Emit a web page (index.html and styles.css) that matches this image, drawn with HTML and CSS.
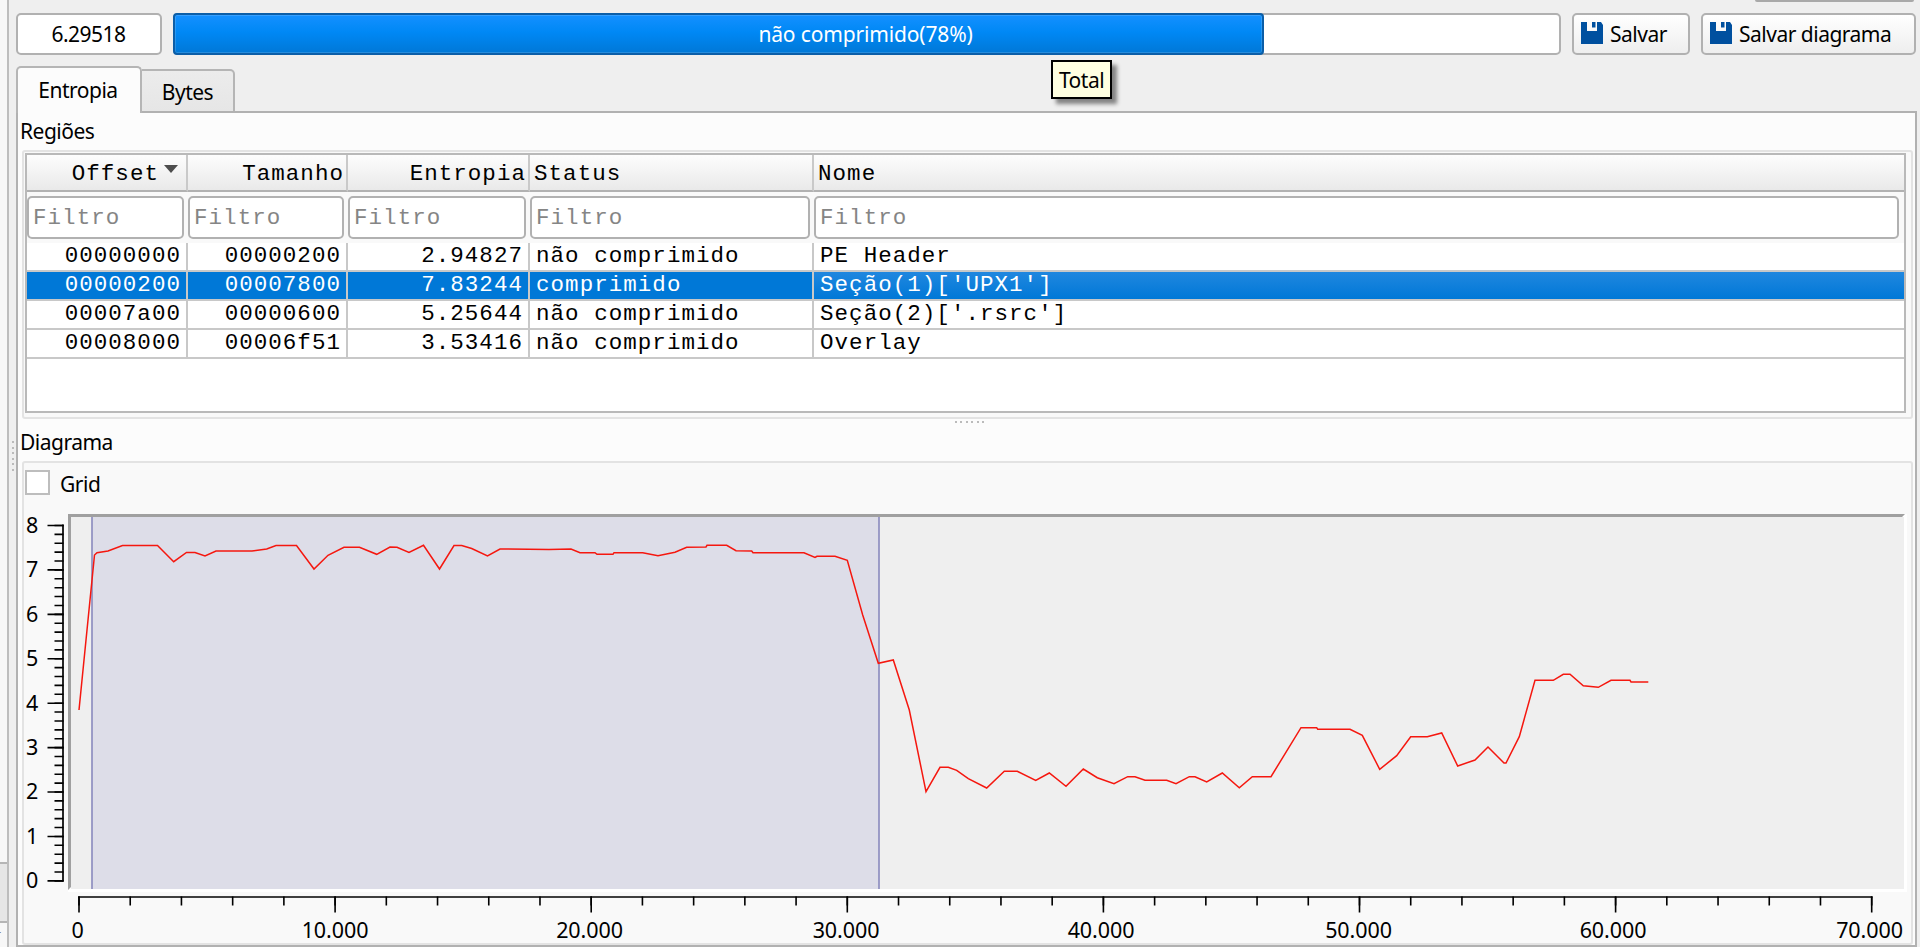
FILE: index.html
```html
<!DOCTYPE html>
<html lang="pt">
<head>
    <meta charset="UTF-8">
    <meta name="viewport" content="width=device-width, initial-scale=1.0">
    <title>Entropia</title>
    <link rel="stylesheet" href="styles.css">
</head>
<body>
    <div class="window">
        <div class="side">
            <div class="side-top"></div>
            <div class="side-button"></div>
            <div class="side-bottom">-</div>
        </div>
        <div class="side-splitter"><i></i><i></i><i></i><i></i><i></i><i></i></div>

        <div class="main">
            <div class="top-edge"></div>
            <div class="toolbar">
                <div class="field total">6.29518</div>
                <div class="progress">
                    <div class="progress-fill" style="width: 78.85%"></div>
                    <span class="progress-text">não comprimido(78%)</span>
                    <div class="tooltip">Total</div>
                </div>
                <button class="button save">
                    <svg class="icon" viewBox="0 0 22 22"><path fill="#00509f" d="M0 0H6V9H16V0H20L22 3V22H0Z"/><path fill="#00509f" d="M11 0H14.5V5.500H11Z"/></svg>
                    <span>Salvar</span>
                </button>
                <button class="button save-diagram">
                    <svg class="icon" viewBox="0 0 22 22"><path fill="#00509f" d="M0 0H6V9H16V0H20L22 3V22H0Z"/><path fill="#00509f" d="M11 0H14.5V5.500H11Z"/></svg>
                    <span>Salvar diagrama</span>
                </button>
            </div>

            <div class="tabs">
                <div class="tab active">Entropia</div>
                <div class="tab">Bytes</div>
            </div>

            <div class="pane">
                <div class="label">Regiões</div>
                <div class="group regions">
                    <div class="table-box">
                        <table>
                            <colgroup>
                                <col class="c1"><col class="c2"><col class="c3"><col class="c4"><col>
                            </colgroup>
                            <thead>
                                <tr>
                                    <th class="num">Offset<span class="sort"></span></th>
                                    <th class="num">Tamanho</th>
                                    <th class="num">Entropia</th>
                                    <th>Status</th>
                                    <th>Nome</th>
                                </tr>
                                <tr class="filters">
                                    <td><input type="text" placeholder="Filtro"></td>
                                    <td><input type="text" placeholder="Filtro"></td>
                                    <td><input type="text" placeholder="Filtro"></td>
                                    <td><input type="text" placeholder="Filtro"></td>
                                    <td><input type="text" placeholder="Filtro"></td>
                                </tr>
                            </thead>
                            <tbody>
                                <tr>
                                    <td class="num">00000000</td>
                                    <td class="num">00000200</td>
                                    <td class="num">2.94827</td>
                                    <td>não comprimido</td>
                                    <td>PE Header</td>
                                </tr>
                                <tr class="selected">
                                    <td class="num">00000200</td>
                                    <td class="num">00007800</td>
                                    <td class="num">7.83244</td>
                                    <td>comprimido</td>
                                    <td>Seção(1)['UPX1']</td>
                                </tr>
                                <tr>
                                    <td class="num">00007a00</td>
                                    <td class="num">00000600</td>
                                    <td class="num">5.25644</td>
                                    <td>não comprimido</td>
                                    <td>Seção(2)['.rsrc']</td>
                                </tr>
                                <tr>
                                    <td class="num">00008000</td>
                                    <td class="num">00006f51</td>
                                    <td class="num">3.53416</td>
                                    <td>não comprimido</td>
                                    <td>Overlay</td>
                                </tr>
                            </tbody>
                        </table>
                    </div>
                </div>

                <div class="splitter"><i></i><i></i><i></i><i></i><i></i><i></i></div>

                <div class="label diagram-label">Diagrama</div>
                <div class="group diagram">
                    <label class="grid-check"><span class="box"></span><span class="grid-text">Grid</span></label>
                    <svg class="plot" viewBox="24 501 1886 442">
                        <!-- canvas frame -->
                        <rect x="68" y="514" width="1839" height="378" fill="#ffffff"/>
                        <path d="M68 514H1905L1902 517H71V887L68 890Z" fill="#a0a0a0"/>
                        <rect x="71" y="517" width="1833" height="372" fill="#efefef"/>

                        <!-- selected region -->
                        <rect x="92" y="517" width="787" height="372" fill="#dddde8"/>
                        <path d="M92 517V889M879 517V889" class="region-edge"/>

                        <polyline class="curve" points="79,710 94.5,555 97,552.7 108,551 122.5,545.5 157.5,545.5 173.7,561.7 186.5,552.5 195,552.5 205,556 216,551 252,551 266.7,549 276,545.5 296.5,545.5 314,569 328,555.3 344,547.3 359.5,547.3 376.7,554.3 390,547 397,547.3 409,552.5 423.5,545.3 439.5,569 454,545.5 461.7,545.5 471.7,548.5 487.5,556 500,549 549,549.5 571,549 580,552.7 595,552.7 597,554.3 613,554.3 614,552.7 642.7,552.7 658,555.7 675,552.3 686.7,547.3 706,547 707,545.3 726.7,545.3 736,550.7 751.7,551 753,552.7 804,552.7 815,557.5 817,556.3 835,556.3 847.3,560.3 862.7,615 878.3,663.3 893.3,660 909.3,710 926,791.7 940,767.3 948.3,767.3 956.7,770.3 968.3,778.7 986.7,788 1004.3,771.3 1017.3,771.3 1035.7,780.3 1049.3,773 1066,786.3 1083.3,769 1097.3,777.7 1114,783.7 1127.7,776.7 1135,776.7 1145,780.3 1166.7,780.3 1176,783.7 1189.3,776.7 1195,776.7 1206.7,782 1222.3,773 1239.3,787.7 1252.3,776.7 1271,776.7 1301,727.7 1316.7,727.7 1317.7,729.3 1350,729.3 1362.3,735.3 1379.7,769.3 1396.7,755.7 1410.7,736.7 1427.3,736.7 1441.7,733 1457.7,766 1475,760 1488,747 1504,763 1506,763 1519.3,736.7 1535,680.3 1553.3,680.3 1563.3,674.3 1570,674.3 1583.3,685.7 1598.3,687.3 1611,680.3 1630,680.3 1631,682 1648.3,682"/>

                        <!-- y axis: backbone, major ticks, minor ticks -->
                        <path d="M63 524.500V881.500" stroke="#000" stroke-width="1.7"/>
                        <path d="M55.500 524.700V882" stroke="#000" stroke-width="16" stroke-dasharray="1.6 42.820"/>
                        <path d="M59 524.700V882" stroke="#000" stroke-width="9" stroke-dasharray="1.6 7.284"/>
                        <g class="axis-text" text-anchor="middle">
                            <text x="32" y="533">8</text>
                            <text x="32" y="577">7</text>
                            <text x="32" y="622">6</text>
                            <text x="32" y="666">5</text>
                            <text x="32" y="711">4</text>
                            <text x="32" y="755">3</text>
                            <text x="32" y="799">2</text>
                            <text x="32" y="844">1</text>
                            <text x="32" y="888">0</text>
                        </g>

                        <!-- x axis -->
                        <path d="M78.200 897H1872.500" stroke="#000" stroke-width="1.7"/>
                        <path d="M78.200 904.500H1872.500" stroke="#000" stroke-width="16" stroke-dasharray="1.6 254.500"/>
                        <path d="M78.200 901H1872.500" stroke="#000" stroke-width="9" stroke-dasharray="1.6 49.620"/>
                        <g class="axis-text" text-anchor="middle">
                            <text x="77.500" y="937.500">0</text>
                            <text x="335" y="937.500">10.000</text>
                            <text x="589.500" y="937.500">20.000</text>
                            <text x="846" y="937.500">30.000</text>
                            <text x="1101" y="937.500">40.000</text>
                            <text x="1358.500" y="937.500">50.000</text>
                            <text x="1613" y="937.500">60.000</text>
                            <text x="1869.500" y="937.500">70.000</text>
                        </g>
                    </svg>
                </div>
            </div>
        </div>
    </div>
</body>
</html>
```

FILE: styles.css
```css
* {
    box-sizing: border-box;
}
body {
    margin: 0;
    height: 947px;
    overflow: hidden;
    background-color: #efefef;
    color: #000;
    font-family: 'Noto Sans', sans-serif;
    font-size: 21px;
    letter-spacing: -0.5px;
}
.window {
    display: flex;
    height: 947px;
}

/* left neighbour and the splitter handle */
.side {
    width: 9px;
    border-right: 2px solid #bdbdbd;
    background-color: #f7f7f7;
    display: flex;
    flex-direction: column;
}
.side-top {
    height: 862px;
}
.side-button {
    height: 61px;
    border-top: 2px solid #b5b5b5;
    border-bottom: 2px solid #b5b5b5;
    background-color: #e6e6e6;
}
.side-bottom {
    font-size: 13px;
    line-height: 16px;
    color: #777;
    margin-left: -3px;
}
.side-splitter {
    width: 7px;
    display: flex;
    flex-direction: column;
    align-items: center;
    gap: 3.500px;
    padding-top: 441px;
    padding-left: 1px;
}
.side-splitter i, .splitter i {
    width: 2px;
    height: 2px;
    background-color: #bbb;
}

.main {
    width: 1901px;
    display: flex;
    flex-direction: column;
}
.top-edge {
    width: 159px;
    height: 2px;
    margin-left: auto;
    margin-right: 3px;
    background-color: #a9a9a9;
    border-radius: 0 0 3px 3px;
}
.toolbar {
    display: flex;
    height: 42px;
    margin-top: 11px;
}
.field, .progress, .button {
    height: 42px;
    border: 2px solid #b1b1b1;
    border-radius: 5px;
    background-color: #fff;
}
.total {
    width: 146px;
    line-height: 38px;
    padding-right: 1px;
    text-align: center;
}
.progress {
    position: relative;
    width: 1388px;
    margin-left: 11px;
}
.progress-fill {
    height: 42px;
    margin: -2px 0 0 -2px;
    border: 2px solid #0b5ea8;
    border-radius: 4px;
    background: linear-gradient(#1490ff, #0088f5 45%, #0078d7);
    box-shadow: inset 0 0 0 1px rgba(255, 255, 255, 0.15);
}
.progress-text {
    position: absolute;
    left: 0;
    right: 3px;
    top: 0;
    line-height: 38px;
    text-align: center;
    letter-spacing: -0.15px;
    color: #fff;
}
.tooltip {
    position: absolute;
    left: 876px;
    top: 45px;
    width: 61px;
    height: 39px;
    border: 2px solid #000;
    background-color: #ffffe1;
    box-shadow: 5px 5px 4px rgba(0, 0, 0, 0.45);
    line-height: 36px;
    text-align: center;
}
.button {
    display: flex;
    padding: 0 0 0 7px;
    background: linear-gradient(#fff, #eee);
    font: inherit;
    letter-spacing: inherit;
    line-height: 38px;
    color: #000;
}
.save {
    width: 118px;
    margin-left: 11px;
}
.save-diagram {
    width: 215px;
    margin-left: 11px;
}
.icon {
    width: 22px;
    height: 22px;
    margin: 7px 7px 0 0;
}

.tabs {
    display: flex;
    align-items: flex-end;
    height: 47px;
    margin-top: 11px;
    margin-bottom: -2px;
}
.tab {
    width: 93px;
    height: 44px;
    border: 2px solid #b5b5b5;
    border-left: none;
    border-radius: 0 5px 0 0;
    background: linear-gradient(#ececec, #e6e6e6);
    line-height: 43px;
    text-align: center;
}
.tab.active {
    width: 126px;
    height: 47px;
    border-left: 2px solid #b5b5b5;
    border-bottom: none;
    border-radius: 5px 5px 0 0;
    background: #fcfcfc;
    line-height: 45px;
    padding-right: 2px;
    z-index: 1;
}
.pane {
    height: 836px;
    border: 2px solid #b1b1b1;
    background-color: #fcfcfc;
}
.label {
    height: 37px;
    padding-left: 2px;
    line-height: 36px;
}
.group {
    margin: 0 2px 0 4px;
    border: 2px solid #e3e3e3;
    border-radius: 3px;
    background-color: #f9f9f9;
}

.regions {
    height: 269px;
    padding: 1px 5px 4px 1px;
}
.table-box {
    height: 260px;
    border: 2px solid #b9b9b9;
    background-color: #fff;
}
table {
    width: 100%;
    table-layout: fixed;
    border-collapse: separate;
    border-spacing: 0;
    font-family: 'Liberation Mono', monospace;
    font-size: 22.500px;
    letter-spacing: 1.040px;
}
.c1 {
    width: 161px;
}
.c2 {
    width: 160px;
}
.c3 {
    width: 182px;
}
.c4 {
    width: 284px;
}
th {
    height: 37px;
    padding: 2px 2px 0 4px;
    border-right: 2px solid #c9c9c9;
    border-bottom: 2px solid #b1b1b1;
    background: linear-gradient(#fdfdfd, #e9e9e9);
    font-weight: normal;
    text-align: left;
    line-height: 30px;
}
th:last-child, tbody td:last-child {
    border-right: none;
}
.num {
    text-align: right;
}
.sort {
    display: inline-block;
    margin: 0 6px 7px 5px;
    border: 7px solid transparent;
    border-top: 8px solid #4d4d4d;
    border-bottom: none;
}
.filters td {
    height: 51px;
    padding: 4px 4px 4px 0;
    background-color: #f9f9f9;
}
.filters td:last-child {
    padding-right: 5px;
}
input {
    display: block;
    width: 100%;
    height: 43px;
    padding: 1px 4px 0;
    border: 2px solid #b1b1b1;
    border-radius: 5px;
    background-color: #fff;
    font: inherit;
    letter-spacing: inherit;
}
input::placeholder {
    color: #858585;
}
tbody td {
    height: 29px;
    padding: 0 5px 0 6px;
    border-right: 2px solid #c8c8c8;
    border-bottom: 2px solid #c8c8c8;
    line-height: 27px;
    white-space: nowrap;
}
.selected td {
    background-color: #0078d7;
    color: #fff;
}
.selected td:last-child {
    background: linear-gradient(#2087df, #0078d7);
}

.splitter {
    display: flex;
    justify-content: center;
    gap: 3.500px;
    height: 10px;
    padding: 2px 0 0 6px;
}
.diagram-label {
    height: 32px;
    line-height: 26px;
}
.diagram {
    height: 484px;
    background-color: #f9f9f9;
}
.grid-check {
    display: flex;
    height: 38px;
    padding: 7px 0 0 1px;
    line-height: 27px;
}
.grid-text {
    padding-top: 1px;
}
.box {
    width: 25px;
    height: 25px;
    margin-right: 10px;
    border: 2px solid #bdbdbd;
    background-color: #fff;
}
.plot {
    display: block;
    width: 1886px;
    height: 442px;
}
.region-edge {
    stroke: #8f8fc0;
    stroke-width: 1.700;
}
.curve {
    fill: none;
    stroke: #f5170f;
    stroke-width: 1.500;
}
.axis-text {
    font-size: 21.500px;
    letter-spacing: -0.1px;
}
```
